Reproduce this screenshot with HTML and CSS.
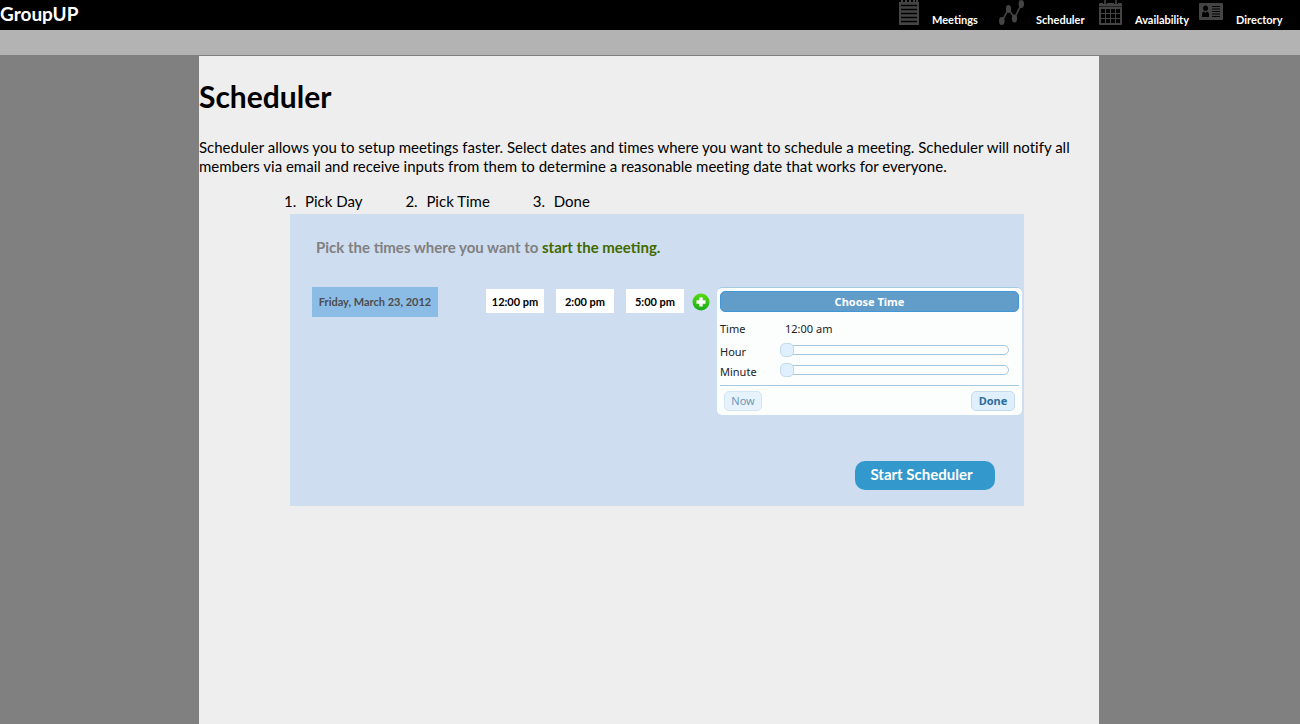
FILE: index.html
```html
<!DOCTYPE html>
<html lang="en">
<head>
<meta charset="utf-8">
<title>GroupUP - Scheduler</title>
<link rel="stylesheet" href="styles.css">
</head>
<body>
<header class="topbar">
  <a class="brand" href="#">GroupUP</a>
  <nav class="nav">
    <a class="nav-link" href="#">
      <svg class="nav-icon" width="21" height="26" viewBox="0 0 21 26" aria-hidden="true">
        <path fill="#444" d="M0 2h20v23H0z"/>
        <path stroke="#444" stroke-width="2" d="M3 0v3M7 0v3M11 0v3M15 0v3M18 0v3"/>
        <path stroke="#000" stroke-width="1.4" d="M2 5.500h16M2 9.500h16M2 13.500h16M2 17.500h16M2 21.500h16"/>
      </svg>
      <span>Meetings</span>
    </a>
    <a class="nav-link" href="#">
      <svg class="nav-icon" width="25" height="26" viewBox="0 0 25 26" aria-hidden="true">
        <path fill="none" stroke="#444" stroke-width="1.600" d="M3 21L9.500 9L15.500 18L22.500 4"/>
        <g fill="#444"><ellipse cx="2.800" cy="21" rx="2.800" ry="4"/><ellipse cx="9.500" cy="9" rx="2.600" ry="4"/><ellipse cx="15.500" cy="18.500" rx="2.600" ry="4"/><ellipse cx="22.300" cy="4" rx="2.700" ry="4"/></g>
      </svg>
      <span>Scheduler</span>
    </a>
    <a class="nav-link" href="#">
      <svg class="nav-icon" width="24" height="26" viewBox="0 0 24 26" aria-hidden="true">
        <rect y="3" width="23" height="22" rx="1" fill="#444"/>
        <path stroke="#000" stroke-width="4" d="M6 0v4M17 0v4"/>
        <path stroke="#444" stroke-width="1.600" d="M6 0v4M17 0v4"/>
        <path stroke="#222" d="M0 6.500h23"/>
        <path fill="#000" d="M2 9h4v4H2zM7 9h4v4H7zM12 9h4v4h-4zM17 9h4v4h-4zM2 14h4v4H2zM7 14h4v4H7zM12 14h4v4h-4zM17 14h4v4h-4zM2 19h4v4H2zM7 19h4v4H7zM12 19h4v4h-4zM17 19h4v4h-4z"/>
      </svg>
      <span>Availability</span>
    </a>
    <a class="nav-link" href="#">
      <svg class="nav-icon" width="25" height="26" viewBox="0 0 25 26" aria-hidden="true">
        <rect y="3" width="24" height="17" rx="1" fill="#444"/>
        <ellipse cx="6.500" cy="8.300" rx="2.400" ry="2.700"/>
        <path d="M3 17v-3q0-2 2-2.500l1.500 1.500l1.500-1.500q2 .5 2 2.500v3z"/>
        <path stroke="#000" stroke-width="1.100" d="M13 6.500h8M13 9h8M13 11.500h8M13 14h8M13 16.500h8"/>
      </svg>
      <span>Directory</span>
    </a>
  </nav>
</header>
<div class="subbar"></div>
<div class="page">
  <main class="content">
    <h1 class="title">Scheduler</h1>
    <p class="intro">Scheduler allows you to setup meetings faster. Select dates and times where you want to schedule a meeting. Scheduler will notify all members via email and receive inputs from them to determine a reasonable meeting date that works for everyone.</p>
    <ol class="steps">
      <li class="step">Pick Day</li>
      <li class="step">Pick Time</li>
      <li class="step">Done</li>
    </ol>
    <section class="panel">
      <h2 class="prompt">Pick the times where you want to <span class="prompt-strong">start the meeting.</span></h2>
      <div class="row">
        <div class="day">Friday, March 23, 2012</div>
        <div class="times">
          <button type="button" class="time">12:00 pm</button>
          <button type="button" class="time">2:00 pm</button>
          <button type="button" class="time">5:00 pm</button>
        </div>
        <button type="button" class="add" aria-label="Add time">
          <svg width="18" height="18" viewBox="0 0 18 18" aria-hidden="true">
            <defs><linearGradient id="green" x1="0" y1="0" x2="0" y2="1"><stop offset="0" stop-color="#5ada12"/><stop offset="1" stop-color="#18ac18"/></linearGradient></defs>
            <circle cx="9" cy="9" r="8.500" fill="url(#green)"/>
            <path stroke="#fff" stroke-width="3.400" d="M9 4.500v9M4.500 9h9"/>
          </svg>
        </button>
        <form class="picker">
          <h3 class="picker-head">Choose Time</h3>
          <div class="fields">
            <label for="time-value">Time</label><output id="time-value" class="value">12:00 am</output>
            <label for="hour">Hour</label><input id="hour" class="slider" type="range" min="0" max="23" value="0">
            <label for="minute">Minute</label><input id="minute" class="slider" type="range" min="0" max="59" value="0">
          </div>
          <div class="picker-foot">
            <button type="button" class="btn btn-now">Now</button>
            <button type="button" class="btn btn-done">Done</button>
          </div>
        </form>
      </div>
      <button type="button" class="start">Start Scheduler</button>
    </section>
  </main>
</div>
</body>
</html>
```

FILE: styles.css
```css
* {
  box-sizing: border-box;
}

body {
  display: flex;
  flex-direction: column;
  min-height: 100vh;
  margin: 0;
  background: #808080;
  color: #000;
  font: 15px/19px Lato, Carlito, sans-serif;
}

button {
  margin: 0;
  padding: 0;
  border: 0;
  font: inherit;
  cursor: pointer;
}

.topbar {
  display: flex;
  justify-content: space-between;
  height: 30px;
  background: #000;
}

.brand {
  color: #fff;
  font-size: 19px;
  font-weight: 700;
  line-height: 27px;
  text-decoration: none;
}

.nav {
  display: grid;
  grid-template-columns: repeat(4, 100px);
  padding-right: 1px;
}

.nav-link {
  display: flex;
  gap: 12px;
  color: #fff;
  font-size: 11px;
  font-weight: 700;
  line-height: 14px;
  text-decoration: none;
}

.nav-link span {
  padding-top: 13px;
}

.nav-icon {
  flex: none;
}

.subbar {
  height: 26px;
  background: #b3b3b3;
  border-bottom: 1px solid #808080;
}

.page {
  display: flex;
  flex: 1;
  justify-content: center;
  padding-right: 2px;
}

.content {
  width: 100%;
  max-width: 900px;
  background: #eee;
}

.title {
  margin: 20px 0 22px;
  font-size: 30px;
  line-height: 40px;
}

.intro {
  margin: 0 0 16px;
  font-variant-ligatures: none;
}

.steps {
  display: flex;
  gap: 43px;
  margin: 0;
  padding: 0 0 3px 85px;
  list-style: none;
  counter-reset: step;
}

.step {
  display: flex;
  counter-increment: step;
}

.step::before {
  content: counter(step) ".";
  width: 21px;
}

.panel {
  display: flex;
  flex-direction: column;
  max-width: 734px;
  margin: 0 auto 0 91px;
  padding: 24px 2px 16px 22px;
  background: #cfddf0;
}

.prompt {
  margin: 0 0 30px 4px;
  color: #808080;
  font-size: 15px;
  line-height: 19px;
}

.prompt-strong {
  color: #406a00;
}

.row {
  display: flex;
  align-items: flex-start;
  font-size: 11px;
  font-weight: 700;
}

.day {
  width: 126px;
  margin-right: 48px;
  background: #8bbce6;
  color: #4d4d4d;
  line-height: 30px;
  text-align: center;
}

.times {
  display: flex;
  gap: 12px;
  padding-top: 2px;
}

.time {
  width: 58px;
  height: 24px;
  background: #fff;
  color: #000;
}

.add {
  height: 18px;
  margin: 6px 7px 0 8px;
  background: none;
}

.add svg {
  display: block;
}

.picker {
  flex: 1;
  padding: 3px;
  border-top: 1px solid #a6c9e2;
  border-radius: 5px;
  background: #fcfdfd;
  color: #222;
  font: 11px/15px "Noto Sans", "Lucida Grande", sans-serif;
}

.picker-head {
  margin: 0;
  border: 1px solid #4297d7;
  border-radius: 5px;
  background: #629dc9;
  color: #fff;
  font-size: 11px;
  line-height: 19px;
  text-align: center;
}

.fields {
  display: grid;
  grid-template-columns: 60px 1fr;
  grid-template-rows: 25px 20px 20px;
  align-items: center;
  padding: 4px 10px 4px 0;
}

.value {
  padding-left: 5px;
}

.slider {
  width: 100%;
  height: 14px;
  margin: 0 0 2px;
  appearance: none;
  background: none;
}

.slider::-webkit-slider-runnable-track {
  height: 10px;
  border: 1px solid #a6c9e2;
  border-radius: 5px;
  background: #fcfdfd;
}

.slider::-webkit-slider-thumb {
  width: 14px;
  height: 14px;
  margin: -3px 0 0 -1px;
  appearance: none;
  border: 1px solid #c5dbec;
  border-radius: 5px;
  background: #dfeffc;
}

.picker-foot {
  display: flex;
  justify-content: space-between;
  padding: 5px 4px 1px;
  border-top: 1px solid #a6c9e2;
}

.btn {
  height: 20px;
  padding-bottom: 2px;
  border: 1px solid #c5dbec;
  border-radius: 5px;
  background: #dfeffc;
  color: #2e6e9e;
}

.btn-now {
  width: 38px;
  opacity: 0.7;
}

.btn-done {
  width: 44px;
  font-weight: 700;
}

.start {
  align-self: flex-end;
  width: 140px;
  height: 29px;
  margin: 46px 27px 0 0;
  padding: 0 7px 2px 0;
  border-radius: 10px;
  background: #3399cc;
  color: #fff;
  font-size: 15px;
  font-weight: 700;
}
```
